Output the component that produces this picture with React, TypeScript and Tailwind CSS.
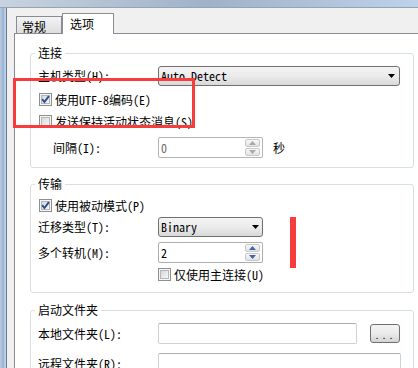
import React from "react";

function Check({ checked }: { checked?: boolean }) {
  return (
    <svg width="13" height="13" viewBox="0 0 13 13" className="shrink-0">
      <defs>
        <linearGradient id="cbg" x1="0" y1="0" x2="1" y2="1">
          <stop offset="0" stopColor="#d6d6d6" />
          <stop offset="1" stopColor="#fafafa" />
        </linearGradient>
      </defs>
      <rect x="0.5" y="0.5" width="12" height="12" fill="#f6f6f6" stroke="#8e8f8f" />
      <rect x="2.5" y="2.5" width="8" height="8" fill="url(#cbg)" stroke="#b3b6ba" />
      {checked && (
        <path d="M3.2 6.2 L5.4 9 L9.9 3.1" fill="none" stroke="#2c4a8e" strokeWidth="1.9" />
      )}
    </svg>
  );
}

function Arrow({ up, color }: { up?: boolean; color: string }) {
  return (
    <svg width="7" height="4" viewBox="0 0 7 4">
      <path d={up ? "M0 4 H7 L3.5 0 Z" : "M0 0 H7 L3.5 4 Z"} fill={color} />
    </svg>
  );
}

function Combo({ text, w, pr }: { text: string; w: string; pr: string }) {
  return (
    <div
      className={`flex h-[20px] ${w} items-center rounded-[3px] border border-[#707070] bg-gradient-to-b from-[#f4f4f4] via-[#ebebeb] to-[#d9d9d9] pl-[2px] ${pr}`}
    >
      <span className="flex-1">{text}</span>
      <Arrow color="#000000" />
    </div>
  );
}

function SpinBtn({ up, color }: { up?: boolean; color: string }) {
  return (
    <div className="flex flex-1 items-center justify-center rounded-[2px] border border-[#c8c8c8] bg-gradient-to-b from-[#f8f8f8] to-[#e2e2e2]">
      <Arrow up={up} color={color} />
    </div>
  );
}

function Spin({ value, disabled }: { value: string; disabled?: boolean }) {
  const color = disabled ? "#a9a9a9" : "#3f66aa";
  return (
    <div
      className={`flex h-[21px] w-[105px] rounded-[2px] border bg-white ${
        disabled ? "border-[#b4b4b4]" : "border-[#abadb3]"
      }`}
    >
      <span className={`flex-1 self-center pl-[2px] ${disabled ? "text-[#6d6d6d]" : ""}`}>{value}</span>
      <div className="flex w-[17px] flex-col gap-px py-px pr-[2px]">
        <SpinBtn up color={color} />
        <SpinBtn color={color} />
      </div>
    </div>
  );
}

function Group({
  title,
  className,
  children,
}: {
  title: string;
  className: string;
  children: React.ReactNode;
}) {
  return (
    <div className={`relative ml-[15px] w-[384px] shrink-0 rounded-[3px] border border-[#d5dfe5] ${className}`}>
      <span className="absolute left-[4px] -top-[8px] bg-white px-[3px] leading-[14px]">{title}</span>
      {children}
    </div>
  );
}

export default function App() {
  return (
    <div className="relative flex h-[368px] w-[418px] flex-col overflow-hidden bg-[#f0f0f0] font-['Noto_Sans_Mono_CJK_SC','Noto_Sans_CJK_SC',sans-serif] text-[12px] leading-[14px] text-black">
      <div className="h-[8px] shrink-0 border-b border-[#96a3b2] bg-gradient-to-r from-[#c8d3df] via-[#9fb2c8] to-[#bed2e9]" />
      <div className="flex min-h-0 flex-1">
        <div className="w-[7px] shrink-0 border-r border-[#6c7886] bg-gradient-to-r from-[#c0cad6] via-[#94b3da] to-[#c8d9ec]" />
        <div className="ml-[7px] flex min-w-0 flex-1 flex-col pt-[5px]">
          <div className="flex h-[20px] shrink-0 items-end pl-[2px]">
            <div className="h-[17px] w-[46px] border-x border-t border-[#898c95] bg-gradient-to-b from-[#f3f3f3] to-[#dedede] pl-[5px] pt-[3px]">
              常规
            </div>
            <div className="relative z-10 -mb-px h-[21px] w-[52px] border-x border-t border-[#898c95] bg-white pl-[7px] pt-[3px]">
              选项
            </div>
          </div>
          <div className="flex flex-1 flex-col border-l border-t border-[#898c95] bg-white">
            <Group title="连接" className="mt-[19px] flex flex-col pl-[7px] pt-[12px] pb-[9px]">
              <div className="flex h-[20px] items-center">
                <span className="w-[120px]">主机类型(H):</span>
                <Combo text="Auto Detect" w="w-[242px]" pr="pr-[4px]" />
              </div>
              <div className="mt-[7px] flex h-[13px] items-center gap-[3px] pl-[1px]">
                <Check checked />
                <span>使用UTF-8编码(E)</span>
              </div>
              <div className="mt-[9px] flex h-[13px] items-center gap-[3px] pl-[1px]">
                <Check />
                <span>发送保持活动状态消息(S)</span>
              </div>
              <div className="mt-[9px] flex h-[21px] items-center">
                <span className="w-[120px] pl-[15px]">间隔(I):</span>
                <Spin value="0" disabled />
                <span className="ml-[10px]">秒</span>
              </div>
            </Group>

            <Group title="传输" className="mt-[16px] flex flex-col pl-[7px] pt-[14px] pb-[11px]">
              <div className="flex h-[13px] items-center gap-[3px] pl-[1px]">
                <Check checked />
                <span>使用被动模式(P)</span>
              </div>
              <div className="mt-[5px] flex h-[20px] items-center">
                <span className="w-[120px]">迁移类型(T):</span>
                <Combo text="Binary" w="w-[105px]" pr="pr-[3px]" />
              </div>
              <div className="mt-[5px] flex h-[21px] items-center">
                <span className="w-[120px]">多个转机(M):</span>
                <Spin value="2" />
              </div>
              <div className="mt-[5px] flex h-[13px] items-center gap-[3px] pl-[120px]">
                <Check />
                <span>仅使用主连接(U)</span>
              </div>
            </Group>

            <Group title="启动文件夹" className="mt-[17px] flex flex-col pl-[7px] pt-[12px] pb-[10px]">
              <div className="flex h-[21px] items-center">
                <span className="w-[120px]">本地文件夹(L):</span>
                <div className="h-[21px] w-[199px] rounded-[2px] border border-[#cdd0d6] border-t-[#abadb3] bg-white" />
                <div className="ml-[13px] flex h-[19px] w-[30px] items-center justify-center rounded-[3px] border border-[#707070] bg-gradient-to-b from-[#f4f4f4] via-[#ebebeb] to-[#d3d3d3] pt-[3px] text-[10px] tracking-[2px]">
                  ...
                </div>
              </div>
              <div className="mt-[9px] flex h-[21px] items-center">
                <span className="w-[120px]">远程文件夹(R):</span>
                <div className="h-[21px] w-[243px] rounded-[2px] border border-[#cdd0d6] border-t-[#abadb3] bg-white" />
              </div>
            </Group>
          </div>
        </div>
      </div>

      <div className="absolute left-[13px] top-[78px] h-[50px] w-[182px] border-[3px] border-[#f83b3b]" />
      <div className="absolute left-[290px] top-[217px] h-[51px] w-[6px] bg-[#f83b3b]" />
    </div>
  );
}
